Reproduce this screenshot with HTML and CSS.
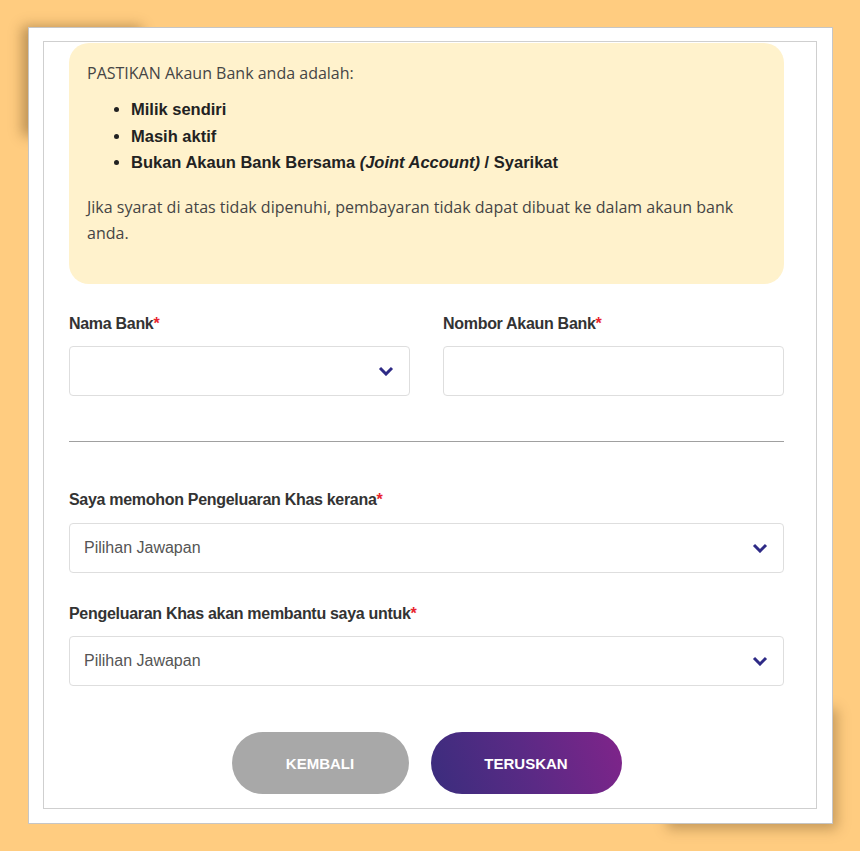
FILE: index.html
```html
<!DOCTYPE html>
<html lang="ms">
<head>
  <meta charset="UTF-8" />
  <meta name="viewport" content="width=device-width, initial-scale=1.0"/>
  <title>Maklumat Akaun Bank</title>
  <link rel="stylesheet" href="styles.css">
</head>
<body>

<div class="frame">
  <div class="panel">

    <div class="notice">
      <p class="lead">PASTIKAN Akaun Bank anda adalah:</p>
      <ul>
        <li>Milik sendiri</li>
        <li>Masih aktif</li>
        <li>Bukan Akaun Bank Bersama <em>(Joint Account)</em> / Syarikat</li>
      </ul>
      <p>Jika syarat di atas tidak dipenuhi, pembayaran tidak dapat dibuat ke dalam akaun bank anda.</p>
    </div>

    <div class="form-row">
      <div class="field">
        <label>Nama Bank<span class="req">*</span></label>
        <div class="select">
          <span class="value"></span>
          <svg class="chev" viewBox="0 0 16 10" width="16" height="10"><path d="M2 2 L8 8 L14 2" fill="none" stroke="#2e2a86" stroke-width="3"/></svg>
        </div>
      </div>
      <div class="field">
        <label>Nombor Akaun Bank<span class="req">*</span></label>
        <div class="input"></div>
      </div>
    </div>

    <hr class="divider">

    <div class="field wide first">
      <label>Saya memohon Pengeluaran Khas kerana<span class="req">*</span></label>
      <div class="select">
        <span class="value">Pilihan Jawapan</span>
        <svg class="chev" viewBox="0 0 16 10" width="16" height="10"><path d="M2 2 L8 8 L14 2" fill="none" stroke="#2e2a86" stroke-width="3"/></svg>
      </div>
    </div>

    <div class="field wide">
      <label>Pengeluaran Khas akan membantu saya untuk<span class="req">*</span></label>
      <div class="select">
        <span class="value">Pilihan Jawapan</span>
        <svg class="chev" viewBox="0 0 16 10" width="16" height="10"><path d="M2 2 L8 8 L14 2" fill="none" stroke="#2e2a86" stroke-width="3"/></svg>
      </div>
    </div>

    <div class="actions">
      <button class="btn back">KEMBALI</button>
      <button class="btn next">TERUSKAN</button>
    </div>

  </div>
</div>

</body>
</html>
```

FILE: styles.css
```css
body {
  margin: 0;
  background: #ffcc80;
  font-family: "Liberation Sans", Arial, sans-serif;
  height: 851px;
  overflow: hidden;
}
.frame {
  position: relative;
  margin: 27px 0 0 28px;
  width: 774px;
  height: 769px;
  padding: 13px 15px 13px 14px;
  background: #fff;
  border: 1px solid #c6c6c6;
}
.frame::before,
.frame::after {
  content: "";
  position: absolute;
  z-index: -1;
}
.frame::before {
  left: 2px;
  top: 2px;
  width: 120px;
  height: 110px;
  box-shadow: -9px -4px 12px rgba(90, 60, 20, 0.4);
}
.frame::after {
  right: 2px;
  bottom: 2px;
  width: 170px;
  height: 120px;
  box-shadow: 7px 8px 12px rgba(90, 60, 20, 0.35);
}
.panel {
  height: 765px;
  border: 1px solid #cfcfcf;
  padding: 1px 32px 0 25px;
  overflow: hidden;
}
.notice {
  background: #fff2cc;
  border-radius: 20px;
  padding: 17px 14px 38px 18px;
  color: #454545;
  font-family: "Open Sans", "Liberation Sans", sans-serif;
  font-size: 16px;
  line-height: 26px;
}
.notice p {
  margin: 0;
}
.notice .lead {
  line-height: 27px;
}
.notice ul {
  margin: 9px 0 18px;
  padding-left: 44px;
  font-family: "Liberation Sans", Arial, sans-serif;
  font-size: 16.5px;
  line-height: 26.7px;
  font-weight: bold;
  color: #222;
}
.form-row {
  display: grid;
  grid-template-columns: 1fr 1fr;
  gap: 33px;
  margin-top: 30px;
}
.field label {
  display: block;
  font-size: 16px;
  font-weight: bold;
  letter-spacing: -0.3px;
  color: #333;
  line-height: 20px;
  margin-bottom: 13px;
}
.form-row .field label {
  margin-bottom: 12px;
}
.req {
  color: #e8252f;
}
.select,
.input {
  height: 48px;
  border: 1px solid #dedede;
  border-radius: 4px;
  background: #fff;
  box-sizing: content-box;
}
.select {
  display: flex;
  align-items: center;
  justify-content: space-between;
  padding: 0 15px 0 14px;
}
.select .value {
  font-size: 16px;
  color: #555;
}
.chev {
  display: block;
}
.divider {
  border: none;
  border-top: 1px solid #a0a0a0;
  margin: 45px 0 0;
}
.field.wide {
  margin-top: 31px;
}
.field.wide.first {
  margin-top: 48px;
}
.field.wide + .field.wide label {
  margin-bottom: 12px;
}
.actions {
  display: flex;
  justify-content: center;
  gap: 22px;
  margin-top: 46px;
}
.btn {
  height: 62px;
  border: none;
  border-radius: 31px;
  color: #fff;
  font-family: "Liberation Sans", Arial, sans-serif;
  font-size: 15px;
  font-weight: bold;
  cursor: pointer;
}
.btn.back {
  width: 177px;
  background: #a8a8a8;
}
.btn.next {
  width: 191px;
  background: linear-gradient(70deg, #3a2d7d 0%, #5a2a85 50%, #80248a 100%);
}
```
